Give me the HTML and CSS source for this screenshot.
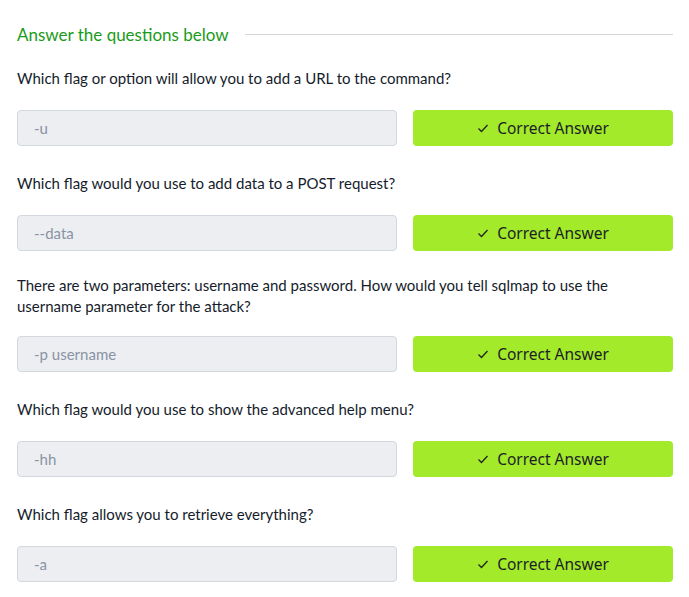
FILE: index.html
```html
<!DOCTYPE html>
<html>
<head>
<meta charset="utf-8">
<link rel="stylesheet" href="styles.css">
</head>
<body>
<div class="panel">
  <div class="heading">
    <span class="heading-text">Answer the questions below</span>
    <span class="heading-line"></span>
  </div>

  <div class="question">
    <p class="q-text">Which flag or option will allow you to add a URL to the command?</p>
    <div class="answer-row">
      <div class="answer-input">-u</div>
      <button class="answer-btn"><svg class="check" viewBox="0 0 12 12" width="12" height="12"><path d="M1.5 6.5 L4.5 9.5 L10.5 3" fill="none" stroke="#222" stroke-width="1.3"/></svg>Correct Answer</button>
    </div>
  </div>

  <div class="question">
    <p class="q-text">Which flag would you use to add data to a POST request?</p>
    <div class="answer-row">
      <div class="answer-input">--data</div>
      <button class="answer-btn"><svg class="check" viewBox="0 0 12 12" width="12" height="12"><path d="M1.5 6.5 L4.5 9.5 L10.5 3" fill="none" stroke="#222" stroke-width="1.3"/></svg>Correct Answer</button>
    </div>
  </div>

  <div class="question question--wrap">
    <p class="q-text">There are two parameters: username and password. How would you tell sqlmap to use the username parameter for the attack?</p>
    <div class="answer-row">
      <div class="answer-input">-p username</div>
      <button class="answer-btn"><svg class="check" viewBox="0 0 12 12" width="12" height="12"><path d="M1.5 6.5 L4.5 9.5 L10.5 3" fill="none" stroke="#222" stroke-width="1.3"/></svg>Correct Answer</button>
    </div>
  </div>

  <div class="question">
    <p class="q-text">Which flag would you use to show the advanced help menu?</p>
    <div class="answer-row">
      <div class="answer-input">-hh</div>
      <button class="answer-btn"><svg class="check" viewBox="0 0 12 12" width="12" height="12"><path d="M1.5 6.5 L4.5 9.5 L10.5 3" fill="none" stroke="#222" stroke-width="1.3"/></svg>Correct Answer</button>
    </div>
  </div>

  <div class="question">
    <p class="q-text">Which flag allows you to retrieve everything?</p>
    <div class="answer-row">
      <div class="answer-input">-a</div>
      <button class="answer-btn"><svg class="check" viewBox="0 0 12 12" width="12" height="12"><path d="M1.5 6.5 L4.5 9.5 L10.5 3" fill="none" stroke="#222" stroke-width="1.3"/></svg>Correct Answer</button>
    </div>
  </div>
</div>
</body>
</html>
```
FILE: styles.css
```css
* { box-sizing: border-box; }
html, body { margin: 0; padding: 0; background: #ffffff; }
body {
  font-family: "Lato", "Noto Sans", sans-serif;
  color: #151c2b;
}
.panel {
  padding: 23px 16px 0 17px;
}
.heading {
  display: flex;
  align-items: center;
  gap: 16px;
  height: 22px;
}
.heading-text {
  color: #1a9b1a;
  font-size: 17px;
  white-space: nowrap;
}
.heading-line {
  flex: 1;
  height: 1px;
  background: #d5d7db;
}
.question { margin-top: 23px; }
.question + .question { margin-top: 27px; }
.q-text {
  margin: 0 0 21px 0;
  font-size: 15px;
  line-height: 21px;
}
.question.question--wrap { margin-top: 24px; }
.question--wrap .q-text { margin-bottom: 19px; }
.answer-row {
  display: flex;
  gap: 16px;
}
.answer-input {
  width: 380px;
  height: 36px;
  background: #eceef2;
  border: 1px solid #d3d7de;
  border-radius: 4px;
  padding: 0 16px;
  display: flex;
  align-items: center;
  color: #8a93a3;
  font-size: 15px;
}
.answer-btn {
  flex: 1;
  height: 36px;
  background: #a3ea2a;
  border: none;
  border-radius: 4px;
  display: flex;
  align-items: center;
  justify-content: center;
  gap: 8px;
  font-family: "Noto Sans", sans-serif;
  font-size: 15.5px;
  color: #1c1f26;
  padding: 0;
}
.check { display: block; }
```
